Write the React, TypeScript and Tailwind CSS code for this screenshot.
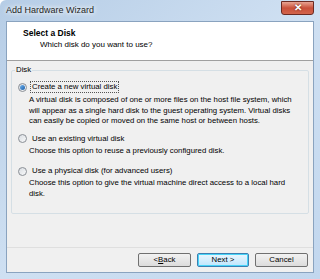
import React from "react";

function Radio({ checked }: { checked?: boolean }) {
  return (
    <span className="relative flex h-[9px] w-[9px] shrink-0 items-center justify-center rounded-full border border-[#8a8f96] bg-gradient-to-br from-[#d9dde2] to-[#f8f9fa]">
      {checked && (
        <span className="h-[5px] w-[5px] rounded-full bg-gradient-to-br from-[#6fb3f0] to-[#1c5fa8]" />
      )}
    </span>
  );
}

function Option({
  label,
  lines,
  checked,
  className,
}: {
  label: string;
  lines: string[];
  checked?: boolean;
  className?: string;
}) {
  return (
    <div className={className}>
      <div className="flex items-center gap-[3px] pl-[6px]">
        <Radio checked={checked} />
        <span
          className={
            checked
              ? "border border-dotted border-[#555] px-px leading-[10px]"
              : "px-[2px] leading-[10px]"
          }
        >
          {label}
        </span>
      </div>
      <div className="mt-[2px] pl-[17px] leading-[10.5px]">
        {lines.map((l, i) => (
          <div key={i}>{l}</div>
        ))}
      </div>
    </div>
  );
}

function Button({ children, primary }: { children: React.ReactNode; primary?: boolean }) {
  return (
    <div
      className={
        primary
          ? "flex h-[14px] w-[52px] items-center justify-center rounded-[2px] border border-[#3c7fb1] bg-gradient-to-b from-[#eaf6fd] to-[#bee6fd] shadow-[inset_0_0_0_1px_#48d4f8]"
          : "flex h-[14px] w-[53px] items-center justify-center rounded-[2px] border border-[#707070] bg-gradient-to-b from-[#f2f2f2] to-[#dcdcdc]"
      }
    >
      {children}
    </div>
  );
}

export default function App() {
  return (
    <div
      className="flex h-[279px] w-[320px] flex-col overflow-hidden rounded-tl-[6px] bg-gradient-to-br from-[#b6cde6] via-[#cfe0f2] to-[#c2d7ee] text-[7.8px] text-black"
      style={{ fontFamily: '"Liberation Sans", Arial, sans-serif' }}
    >
      {/* Title bar */}
      <div className="flex h-[21px] shrink-0 items-start justify-between pl-[6px] pr-[6px]">
        <span className="mt-[5px] text-[9px] leading-[11px] text-[#1e1e1e] [text-shadow:0_0_4px_#fff,0_0_6px_#fff]">
          Add Hardware Wizard
        </span>
        <div className="mt-[1px] flex h-[14px] w-[33px] items-center justify-center rounded-b-[3px] border border-[#6b2a22] bg-gradient-to-b from-[#e8a493] via-[#c9503a] to-[#d3654c] text-[10px] font-bold leading-none text-white [text-shadow:0_0_2px_#5a1a10]">
          ✕
        </div>
      </div>

      {/* Client area */}
      <div className="mx-[6px] flex h-[252px] shrink-0 flex-col border border-[#8aa3bf] bg-[#f0f0f0]">
        <div className="h-[39px] shrink-0 border-b border-[#a0a0a0] bg-white pl-[16px] pt-[6px]">
          <div className="text-[8.5px] font-bold leading-[11px]">Select a Disk</div>
          <div className="pl-[17px] text-[8px] leading-[11px]">Which disk do you want to use?</div>
        </div>

        <div className="px-[4px] pt-[4px]">
          <fieldset className="h-[149px] rounded-[2px] border border-[#d5dfe5] pr-[6px]">
            <legend className="ml-[3px] px-[1px] leading-[10px]">Disk</legend>
            <Option
              className="mt-[6px]"
              checked
              label="Create a new virtual disk"
              lines={[
                "A virtual disk is composed of one or more files on the host file system, which",
                "will appear as a single hard disk to the guest operating system. Virtual disks",
                "can easily be copied or moved on the same host or between hosts.",
              ]}
            />
            <Option
              className="mt-[7px]"
              label="Use an existing virtual disk"
              lines={["Choose this option to reuse a previously configured disk."]}
            />
            <Option
              className="mt-[10px]"
              label="Use a physical disk (for advanced users)"
              lines={[
                "Choose this option to give the virtual machine direct access to a local hard",
                "disk.",
              ]}
            />
          </fieldset>
        </div>

        <div className="mt-auto flex h-[25px] shrink-0 items-center justify-end gap-[6px] border-t border-[#dfdfdf] pr-[5px]">
          <Button>
            &lt; <span className="underline">B</span>ack
          </Button>
          <Button primary>Next &gt;</Button>
          <Button>Cancel</Button>
        </div>
      </div>
    </div>
  );
}
